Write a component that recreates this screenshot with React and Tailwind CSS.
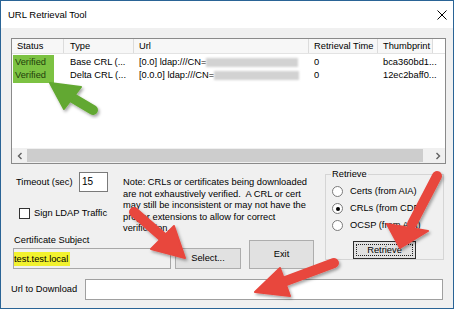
import React from "react";

function Chevron({ dir }) {
  return (
    <svg width="6" height="8" viewBox="0 0 6 8">
      {dir === "left" ? (
        <polyline points="4.5,1 1.5,4 4.5,7" fill="none" stroke="#606060" strokeWidth="1.4" />
      ) : (
        <polyline points="1.5,1 4.5,4 1.5,7" fill="none" stroke="#606060" strokeWidth="1.4" />
      )}
    </svg>
  );
}

function Radio({ checked, label }) {
  return (
    <div className="flex items-center h-[11px] ml-[6px]">
      <div className="w-[11px] h-[11px] rounded-full border border-[#7a7a7a] bg-white flex items-center justify-center">
        {checked && <div className="w-[4px] h-[4px] rounded-full bg-black" />}
      </div>
      <span className="ml-[7px] whitespace-nowrap">{label}</span>
    </div>
  );
}

function Blur({ w }) {
  return <span className={`inline-block align-middle h-[9px] bg-[#d2d2d2] blur-[1.2px] ${w}`} />;
}

export default function App() {
  return (
    <div className="relative w-[454px] h-[309px] border border-[#2a6496] bg-[#f0f0f0] font-['Liberation_Sans',Arial,sans-serif] text-[9.3px] leading-[11px] text-black overflow-hidden">
      {/* title bar */}
      <div className="flex h-[27px] items-center bg-white pl-[7px] pr-[6px]">
        <span className="text-[9.5px]">URL Retrieval Tool</span>
        <svg className="ml-auto" width="10" height="10" viewBox="0 0 10 10">
          <line x1="0.5" y1="0.5" x2="9.5" y2="9.5" stroke="#000" strokeWidth="1" />
          <line x1="9.5" y1="0.5" x2="0.5" y2="9.5" stroke="#000" strokeWidth="1" />
        </svg>
      </div>

      {/* body */}
      <div className="flex flex-col">
        {/* list view */}
        <div className="ml-[10px] mt-[10px] w-[435px] h-[126px] border border-[#8a8a8a] bg-white flex flex-col">
          <div className="flex h-[15px] border-b border-[#e3e3e3] bg-[#f7f7f7] items-center">
            <div className="w-[52px] h-full border-r border-[#dcdcdc] pl-[5px] flex items-center">Status</div>
            <div className="w-[70px] h-full border-r border-[#dcdcdc] pl-[6px] flex items-center">Type</div>
            <div className="w-[175px] h-full border-r border-[#dcdcdc] pl-[5px] flex items-center">Url</div>
            <div className="w-[69px] h-full border-r border-[#dcdcdc] pl-[5px] flex items-center whitespace-nowrap">Retrieval Time</div>
            <div className="w-[55px] h-full border-r border-[#dcdcdc] pl-[5px] flex items-center">Thumbprint</div>
            <div className="flex-1 h-full bg-white" />
          </div>
          <div className="flex-1 flex leading-[13px]">
            <div className="w-[52px]">
              <div className="mt-[1px] ml-[1px] w-[41px] h-[28px] bg-[#7cc242] pt-[1px] pl-[2px] text-[#22400c]">
                <div>Verified</div>
                <div>Verified</div>
              </div>
            </div>
            <div className="w-[70px] pl-[6px] pt-[2px] whitespace-nowrap">
              <div>Base CRL (...</div>
              <div>Delta CRL (...</div>
            </div>
            <div className="w-[175px] pl-[5px] pt-[2px] whitespace-nowrap">
              <div>[0.0] ldap:///CN=<Blur w="w-[92px]" /></div>
              <div>[0.0.0] ldap:///CN=<Blur w="w-[85px]" /></div>
            </div>
            <div className="w-[69px] pl-[5px] pt-[2px]">
              <div>0</div>
              <div>0</div>
            </div>
            <div className="w-[60px] pl-[5px] pt-[2px] whitespace-nowrap">
              <div>bca360bd1...</div>
              <div>12ec2baff0...</div>
            </div>
          </div>
          <div className="h-[15px] flex items-center bg-[#f0f0f0]">
            <div className="w-[15px] h-full flex items-center justify-center"><Chevron dir="left" /></div>
            <div className="flex-1 h-full flex items-center">
              <div className="w-[396px] h-[13px] bg-[#cdcdcd]" />
            </div>
            <div className="w-[15px] h-full flex items-center justify-center"><Chevron dir="right" /></div>
          </div>
        </div>

        {/* lower controls */}
        <div className="flex">
          <div className="ml-[10px] w-[303px] flex flex-col">
            <div className="flex h-[71px]">
              <div className="w-[112px] flex flex-col">
                <div className="mt-[8px] flex items-center h-[20px]">
                  <span className="ml-[5px] w-[63px] whitespace-nowrap">Timeout (sec)</span>
                  <div className="w-[29px] h-[20px] bg-white border border-[#7a7a7a] pl-[2px] pt-[3px] text-[10px]">15</div>
                </div>
                <div className="mt-[16px] flex items-center h-[11px]">
                  <div className="ml-[8px] w-[11px] h-[11px] border border-[#333333] bg-white" />
                  <span className="ml-[4px] whitespace-nowrap">Sign LDAP Traffic</span>
                </div>
              </div>
              <div className="mt-[13px] leading-[11.5px] whitespace-pre">
                {"Note: CRLs or certificates being downloaded\nare not exhaustively verified.  A CRL or cert\nmay still be inconsistent or may not have the\nproper extensions to allow for correct\nverification."}
              </div>
            </div>
            <div className="flex items-end">
              <div className="flex flex-col">
                <span className="ml-[3px] leading-[11px] whitespace-nowrap">Certificate Subject</span>
                <div className="mt-[2px] ml-[2px] w-[158px] h-[21px] border border-[#a8a8a8] bg-[#f0f0f0] flex items-center">
                  <span className="bg-[#f2f22e] pr-[2px] leading-[14px]">test.test.local</span>
                </div>
              </div>
              <button className="ml-[4px] w-[66px] h-[21px] bg-[#e1e1e1] border border-[#adadad] flex items-center justify-center">Select...</button>
              <button className="ml-[8px] w-[65px] h-[29px] bg-[#e1e1e1] border border-[#adadad] flex items-center justify-center">Exit</button>
            </div>
          </div>

          <fieldset className="ml-[11px] mt-[5px] w-[119px] h-[91px] border border-[#d5d5d5] p-0">
            <legend className="ml-[5px] px-[1px] leading-[11px]">Retrieve</legend>
            <div className="flex flex-col gap-[6px] mt-[6px]">
              <Radio label="Certs (from AIA)" />
              <Radio checked label="CRLs (from CDP)" />
              <Radio label="OCSP (from AIA)" />
            </div>
            <button className="mt-[10px] ml-[27px] w-[63px] h-[18px] bg-[#e1e1e1] border border-[#2d2d2d] p-[2px] flex">
              <div className="flex-1 border border-dotted border-[#222] flex items-center justify-center leading-[10px]">Retrieve</div>
            </button>
          </fieldset>
        </div>

        {/* url row */}
        <div className="mt-[10px] flex items-center">
          <span className="ml-[10px] w-[74px] whitespace-nowrap">Url to Download</span>
          <div className="w-[358px] h-[21px] bg-white border border-[#a0a0a0]" />
        </div>
      </div>

      {/* annotation arrows */}
      <svg className="absolute left-[-1px] top-[-1px] pointer-events-none" width="454" height="309" viewBox="0 0 454 309">
        <defs>
          <filter id="sh" x="-30%" y="-30%" width="160%" height="160%">
            <feDropShadow dx="1.5" dy="2" stdDeviation="1.5" floodColor="#000" floodOpacity="0.35" />
          </filter>
        </defs>
        <g filter="url(#sh)">
          <line x1="93" y1="110" x2="71" y2="97" stroke="#62a830" strokeWidth="10" strokeLinecap="round" />
          <polygon points="50,83 81,87 64,109" fill="#62a830" stroke="#62a830" strokeWidth="2" strokeLinejoin="round" />
        </g>
        <g filter="url(#sh)" fill="#e8463d" stroke="#e8463d">
          <line x1="134" y1="212" x2="165" y2="239" strokeWidth="10" strokeLinecap="round" />
          <polygon points="185,258 151,249 174,226" strokeWidth="2" strokeLinejoin="round" />
          <line x1="437" y1="176" x2="412" y2="224" strokeWidth="10" strokeLinecap="round" />
          <polygon points="400,248 387,224 428,231" strokeWidth="2" strokeLinejoin="round" />
          <line x1="334" y1="263" x2="283" y2="282" strokeWidth="10" strokeLinecap="round" />
          <polygon points="255,292 280,268 290,296" strokeWidth="2" strokeLinejoin="round" />
        </g>
      </svg>
    </div>
  );
}
